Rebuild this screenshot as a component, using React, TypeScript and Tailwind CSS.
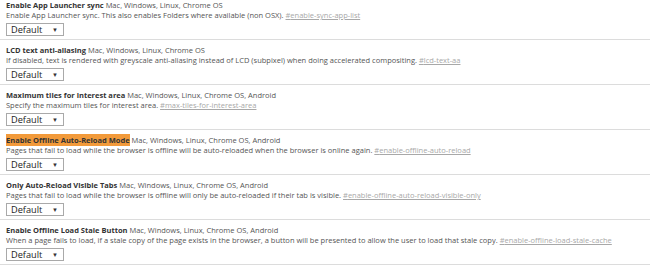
const flags = [
  {
    name: 'Enable App Launcher sync',
    platforms: 'Mac, Windows, Linux, Chrome OS',
    desc: 'Enable App Launcher sync. This also enables Folders where available (non OSX).',
    anchor: 'enable-sync-app-list',
  },
  {
    name: 'LCD text anti-aliasing',
    platforms: 'Mac, Windows, Linux, Chrome OS',
    desc: 'If disabled, text is rendered with greyscale anti-aliasing instead of LCD (subpixel) when doing accelerated compositing.',
    anchor: 'lcd-text-aa',
  },
  {
    name: 'Maximum tiles for interest area',
    platforms: 'Mac, Windows, Linux, Chrome OS, Android',
    desc: 'Specify the maximum tiles for interest area.',
    anchor: 'max-tiles-for-interest-area',
  },
  {
    name: 'Enable Offline Auto-Reload Mode',
    platforms: 'Mac, Windows, Linux, Chrome OS, Android',
    desc: 'Pages that fail to load while the browser is offline will be auto-reloaded when the browser is online again.',
    anchor: 'enable-offline-auto-reload',
    highlight: true,
  },
  {
    name: 'Only Auto-Reload Visible Tabs',
    platforms: 'Mac, Windows, Linux, Chrome OS, Android',
    desc: 'Pages that fail to load while the browser is offline will only be auto-reloaded if their tab is visible.',
    anchor: 'enable-offline-auto-reload-visible-only',
  },
  {
    name: 'Enable Offline Load Stale Button',
    platforms: 'Mac, Windows, Linux, Chrome OS, Android',
    desc: 'When a page fails to load, if a stale copy of the page exists in the browser, a button will be presented to allow the user to load that stale copy.',
    anchor: 'enable-offline-load-stale-cache',
  },
]

function Experiment({ flag }: { flag: (typeof flags)[number] }) {
  return (
    <div className="h-[45px] border-b border-[#dcdcdc] pl-[6px] pt-[5px]">
      {/* name + platforms */}
      <div className="h-[10px] whitespace-nowrap text-[7.5px] leading-[10px] text-[#333]">
        <span className={`font-bold ${flag.highlight ? 'bg-[#f29a3a] py-[1px]' : ''}`}>{flag.name}</span>{' '}
        <span className="text-[#555]">{flag.platforms}</span>
      </div>
      {/* description + anchor link */}
      <div className="h-[10px] whitespace-nowrap text-[7.5px] leading-[10px] text-[#555]">
        {flag.desc}{' '}
        <a className="text-[#a8a8a8] underline">#{flag.anchor}</a>
      </div>
      {/* select */}
      <div className="mt-[3px] flex h-[13px] w-[58px] items-center justify-between border border-[#a9a9a9] bg-white pl-[4px] pr-[5px]">
        <span className="text-[9.2px] leading-none text-[#222]">Default</span>
        <span className="text-[6px] leading-none text-[#333]">▼</span>
      </div>
    </div>
  )
}

export default function App() {
  return (
    <div className="h-[266px] w-[650px] overflow-hidden bg-white font-['Open_Sans',sans-serif]">
      <div className="-mt-[5px]">
        {flags.map((f) => (
          <Experiment key={f.anchor} flag={f} />
        ))}
      </div>
    </div>
  )
}
